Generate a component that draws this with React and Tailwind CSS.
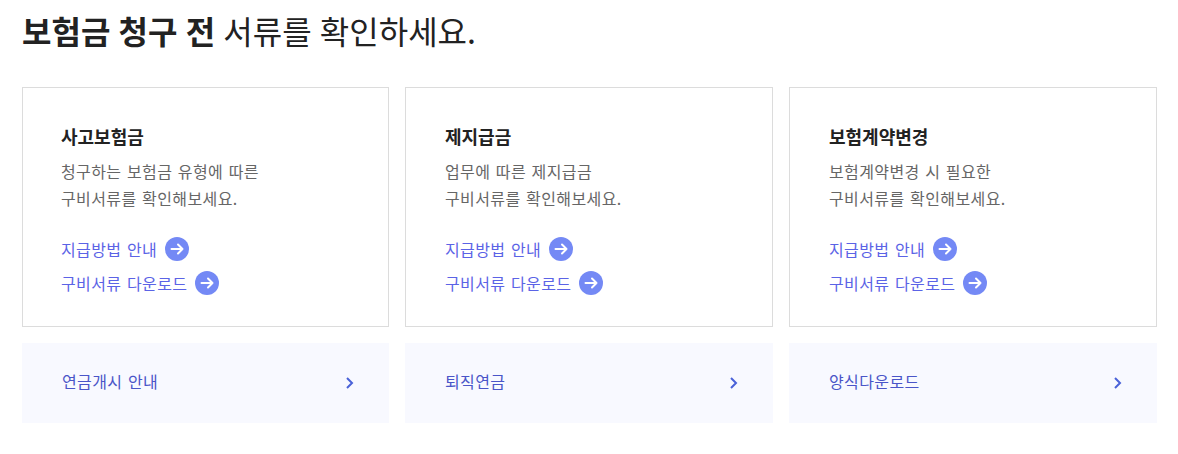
const cards = [
  { title: '사고보험금', desc: '청구하는 보험금 유형에 따른', link: '연금개시 안내' },
  { title: '제지급금', desc: '업무에 따른 제지급금', link: '퇴직연금' },
  { title: '보험계약변경', desc: '보험계약변경 시 필요한', link: '양식다운로드' },
]

function ArrowCircle() {
  return (
    <span className="flex h-6 w-6 items-center justify-center rounded-full bg-[#7489f5]">
      <svg width="14" height="12" viewBox="0 0 14 12" fill="none" stroke="#fff" strokeWidth="2" strokeLinecap="round" strokeLinejoin="round">
        <path d="M1.5 6h11M8 1.5 12.5 6 8 10.5" />
      </svg>
    </span>
  )
}

function LinkRow({ children }) {
  return (
    <a className="flex h-6 items-center gap-2 text-[16px] text-[#5b63e6]">
      {children}
      <ArrowCircle />
    </a>
  )
}

export default function App() {
  return (
    <div className="w-[1178px] h-[454px] bg-white px-[22px] pt-[8px] font-['Noto_Sans_CJK_KR','Noto_Sans',sans-serif] text-[#222]">
      <h2 className="h-[44px] text-[32px] leading-[44px] [word-spacing:1px]">
        <strong className="font-bold">보험금 청구 전</strong> 서류를 확인하세요.
      </h2>
      <div className="mt-[35px] grid grid-cols-[367px_368px_368px] gap-x-4 gap-y-4 tracking-[0.4px] [word-spacing:1.5px]">
        {cards.map((c) => (
          <div key={c.title} className="h-[240px] border border-[#dcdcdc] pl-[39px] first:pl-[38px] pr-[38px] pt-[34px]">
            <h3 className="text-[18px] font-bold leading-[28px] tracking-normal text-[#222]">{c.title}</h3>
            <p className="mt-[8px] text-[16px] leading-[27px] text-[#666]">
              {c.desc}
              <br />
              구비서류를 확인해보세요.
            </p>
            <div className="mt-[25px] flex flex-col gap-[10px]">
              <LinkRow>지급방법 안내</LinkRow>
              <LinkRow>구비서류 다운로드</LinkRow>
            </div>
          </div>
        ))}
        {cards.map((c) => (
          <a key={c.link} className="flex h-[80px] items-center justify-between bg-[#f8f9ff] pb-[4px] pl-[40px] pr-[34px] text-[16px] text-[#4a55c8]">
            {c.link}
            <svg className="mt-[4px]" width="10" height="14" viewBox="0 0 10 14" fill="none" stroke="#4a62d8" strokeWidth="2">
              <path d="M2 2l5 5-5 5" />
            </svg>
          </a>
        ))}
      </div>
    </div>
  )
}
